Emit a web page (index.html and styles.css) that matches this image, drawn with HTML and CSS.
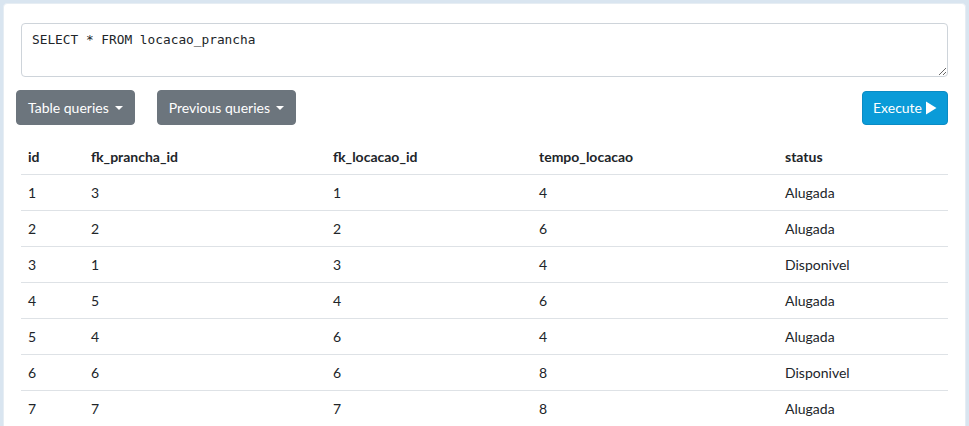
FILE: index.html
```html
<!DOCTYPE html>
<html>
<head>
<meta charset="utf-8">
<link rel="stylesheet" href="styles.css">
</head>
<body>
<div class="card">
  <textarea class="query" spellcheck="false">SELECT * FROM locacao_prancha</textarea>
  <div class="toolbar">
    <button class="btn btn-secondary">Table queries <span class="caret"></span></button>
    <button class="btn btn-secondary">Previous queries <span class="caret"></span></button>
    <button class="btn btn-primary">Execute <svg class="play" width="12" height="14" viewBox="0 0 12 14"><path d="M1 0.5 L11.5 7 L1 13.5 Z" fill="#fff"/></svg></button>
  </div>
  <table class="results">
    <thead>
      <tr><th class="c1">id</th><th class="c2">fk_prancha_id</th><th class="c3">fk_locacao_id</th><th class="c4">tempo_locacao</th><th>status</th></tr>
    </thead>
    <tbody>
      <tr><td>1</td><td>3</td><td>1</td><td>4</td><td>Alugada</td></tr>
      <tr><td>2</td><td>2</td><td>2</td><td>6</td><td>Alugada</td></tr>
      <tr><td>3</td><td>1</td><td>3</td><td>4</td><td>Disponivel</td></tr>
      <tr><td>4</td><td>5</td><td>4</td><td>6</td><td>Alugada</td></tr>
      <tr><td>5</td><td>4</td><td>6</td><td>4</td><td>Alugada</td></tr>
      <tr><td>6</td><td>6</td><td>6</td><td>8</td><td>Disponivel</td></tr>
      <tr><td>7</td><td>7</td><td>7</td><td>8</td><td>Alugada</td></tr>
    </tbody>
  </table>
</div>
</body>
</html>
```
FILE: styles.css
```css
html, body { margin: 0; padding: 0; }
body {
  background: #d9e5f0;
  padding: 3px 3px 0 3px;
  font-family: "Lato", "Noto Sans", sans-serif;
  font-size: 14px;
  color: #212529;
  overflow: hidden;
  height: 426px;
  box-sizing: border-box;
}
.card {
  background: #fff;
  border: 1px solid #e6edf3;
  border-radius: 4px;
  padding: 19px 18px 0 12px;
  height: 500px;
}
.query {
  display: block;
  box-sizing: border-box;
  margin-left: 5px;
  width: 927px;
  height: 54px;
  border: 1px solid #ced4da;
  border-radius: 4px;
  padding: 8px 10px;
  font-family: "DejaVu Sans Mono", "Liberation Mono", monospace;
  font-size: 12.8px;
  color: #212529;
  resize: vertical;
  outline: none;
}
.toolbar {
  display: flex;
  align-items: center;
  margin-top: 13px;
  gap: 22px;
}
.btn {
  font-family: inherit;
  font-size: 14px;
  color: #fff;
  border: 1px solid transparent;
  border-radius: 4px;
  height: 35px;
  padding: 0 11px;
  display: inline-flex;
  align-items: center;
  cursor: pointer;
}
.btn-secondary { background: #6c757d; border-color: #6c757d; }
.btn-primary {
  background: #0a9bd8;
  border-color: #0a8bc4;
  margin-left: auto;
  margin-right: -1px;
  padding: 0 10px;
  height: 34px;
}
.caret {
  display: inline-block;
  margin-left: 6px;
  width: 0; height: 0;
  border-left: 4px solid transparent;
  border-right: 4px solid transparent;
  border-top: 4px solid #fff;
}
.play { margin-left: 3px; }
.results {
  margin-top: 14px;
  margin-left: 5px;
  width: 927px;
  border-collapse: collapse;
  table-layout: fixed;
}
.results th, .results td {
  text-align: left;
  padding: 7px 7px;
  line-height: 21px;
  border-bottom: 1px solid #dee2e6;
}
.results th { font-weight: 700; }
.c1 { width: 49px; }
.c2 { width: 228px; }
.c3 { width: 192px; }
.c4 { width: 232px; }
```
